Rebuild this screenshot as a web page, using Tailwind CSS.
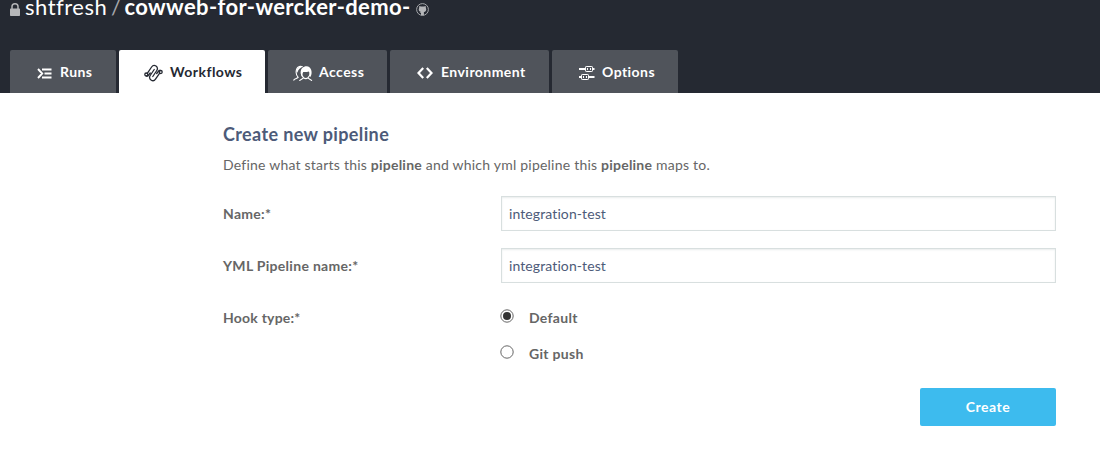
<!DOCTYPE html>
<html lang="en">
<head>
<meta charset="utf-8">
<title>Create new pipeline</title>
<script src="https://cdn.jsdelivr.net/npm/@tailwindcss/browser@4"></script>
</head>
<body class="h-[455px] overflow-hidden bg-white font-['Lato',sans-serif] text-[14px] text-[#666] [font-variant-ligatures:none]">
<header class="flex h-[93px] flex-col justify-between bg-[#252932] pl-[10px]">
  <h1 class="-mt-[7px] flex h-7 items-center whitespace-pre text-[22px] leading-7 text-white">
    <svg class="mt-[4px] mr-[5px] h-[13px] w-[10px] shrink-0" viewBox="0 0 10 13" fill="none"><path d="M2 6V3.600a3 2.800 0 0 1 6 0V6" stroke="#b5b6b9" stroke-width="1.500"/><rect y="5.500" width="10" height="7.500" rx=".7" fill="#b5b6b9"/></svg><span class="w-[82px] tracking-[.5px]">shtfresh</span><span class="w-[17.5px] pl-[4px] text-[#a5a7ab]">/</span><span class="w-[286.5px] font-bold tracking-[.37px]">cowweb-for-wercker-demo-</span><svg class="mt-[4px] ml-[5px] h-[13px] w-[13px] shrink-0" viewBox="0 0 13 13" fill="none"><circle cx="6.500" cy="6.500" r="5.900" stroke="#a5a7ab"/><path d="M3.300 3 5 3.600h3L9.700 3l.2 2c1 2.400-.3 3.800-2 4v3.200H5V10L3.500 9.300 5 9C3.200 8.700 2.100 7.300 3.100 5z" fill="#b5b6b9"/></svg>
  </h1>
  <nav class="flex h-[43px] gap-[3px] font-bold tracking-[.45px] text-white">
    <a class="flex w-[106px] items-center rounded-t-[2px] bg-[#50545b] pl-[27px]"><svg class="mt-[3px] mr-2 h-[13px] w-[15px]" viewBox="0 0 15 13" fill="none" stroke="currentColor" stroke-width="1.900"><path d="M1 2 5.200 6.500 1 11M5 2.500h9.500M7.500 6.500h7M5 10.500h9.500"/></svg>Runs</a>
    <a class="flex w-[146px] items-center rounded-t-[2px] bg-white pl-[25px] text-[#252932]"><svg class="mt-[3px] mr-[7px] h-[18px] w-[19px]" viewBox="0 0 19 18" fill="none" stroke="currentColor" stroke-width="1.300" stroke-linecap="round"><circle cx="2.300" cy="10.500" r="1.500"/><circle cx="16.700" cy="8" r="1.500"/><path d="M3.300 9.300 7.600 3C8.800 1.200 10.500 1 12 2s1.900 2.900.8 4.500L8.800 12.500M15.700 9.200 11.500 15.200C10.300 16.900 8.500 17 7 16S5.100 13.100 6.200 11.500L10.200 5.500M2.500 12h1.300L6.200 9M16.400 6.500h-1.300L12.700 9.500"/></svg>Workflows</a>
    <a class="flex w-[119px] items-center rounded-t-[2px] bg-[#50545b] pl-[25px]"><svg class="mt-[3px] mr-[6px] h-[17px] w-[20px]" viewBox="0 0 20 17" fill="none" stroke="currentColor" stroke-width="1.100"><path d="M.5 15.500c.5-1.900 4.200-2 4.700-3.200C2.600 9.600 3 6 3.700 4 4.700 1.200 7.500 1 9.600 1.800M6.500 16c.4-1.900 3.500-1.700 4-3.300C7.500 10 8.200 6 9.800 5M18.800 16c-.4-1.900-3.300-1.700-3.800-3.300 1.500-1.300 2.300-3.200 1.900-5M10.500 12.800c1.400 1 3.200 1 4.500 0"/><path d="M9.300 12C7 9 7.200 5 9.300 3c2-2 5.500-2.200 7.400-.6 2.300 2 2.600 7 .5 9.800-.2-2.700-.3-4.200-1.400-5.800-1.600.8-4.200.7-5.600.6-.8 1.500-.9 3-.9 5z" fill="currentColor" stroke="none"/><path d="M3.500 7C3.600 3 6 .7 9.800 1.500 7.600 3 5.300 4 4.600 7.500z" fill="currentColor" stroke="none"/></svg>Access</a>
    <a class="flex w-[159px] items-center rounded-t-[2px] bg-[#50545b] pl-[27px]"><svg class="mt-[3px] mr-2 h-3 w-4" viewBox="0 0 16 12" fill="none" stroke="currentColor" stroke-width="2.200"><path d="M6.200 1 1.500 6l4.700 5M9.800 1l4.700 5-4.700 5"/></svg>Environment</a>
    <a class="flex w-[126px] items-center rounded-t-[2px] bg-[#50545b] pl-[27px]"><svg class="mt-[3px] mr-[7px] h-[14px] w-4" viewBox="0 0 16 14" fill="none" stroke="currentColor"><path d="M0 3h6.500M13.500 3h2M0 11h2M9.500 11h6" stroke-width="2"/><rect x="6.500" y=".5" width="7" height="5" rx=".7"/><rect x="2.500" y="8.500" width="7" height="5" rx=".7"/><path d="M8.500 2v2M11.500 2v2M4.500 10v2M7.500 10v2"/></svg>Options</a>
  </nav>
</header>
<main class="ml-[223px] w-[833px] pt-[29px]">
  <h2 class="h-6 text-[18px] leading-6 font-bold tracking-[.37px] text-[#4d5b79]">Create new pipeline</h2>
  <p class="mt-[9px] h-5 leading-5 tracking-[.22px]">Define what starts this <b>pipeline</b> and which yml pipeline this <b>pipeline</b> maps to.</p>
  <form class="mt-[21px] tracking-[.3px]">
    <div class="mb-[17px] flex h-[35px] items-center"><label class="w-[278px] font-bold">Name:*</label><input class="h-[35px] w-[555px] border border-[#d8dfdf] px-[7px] tracking-[.1px] text-[#4d5b79] shadow-[inset_0_1px_2px_#e9eded]" value="integration-test"></div>
    <div class="mb-[17px] flex h-[35px] items-center"><label class="w-[278px] font-bold">YML Pipeline name:*</label><input class="h-[35px] w-[555px] border border-[#d8dfdf] px-[7px] tracking-[.1px] text-[#4d5b79] shadow-[inset_0_1px_2px_#e9eded]" value="integration-test"></div>
    <div class="flex pt-2 font-bold">
      <span class="w-[278px] leading-5 tracking-[.22px]">Hook type:*</span>
      <div class="flex flex-col gap-4 leading-5">
        <label class="flex h-5"><svg class="mt-px -ml-px mr-[15px] h-[14px] w-[14px]" viewBox="0 0 14 14"><circle cx="7" cy="7" r="6.200" fill="white" stroke="#666"/><circle cx="7" cy="7" r="4" fill="#333"/></svg>Default</label>
        <label class="flex h-5"><svg class="mt-px -ml-px mr-[15px] h-[14px] w-[14px]" viewBox="0 0 14 14"><circle cx="7" cy="7" r="6.200" fill="white" stroke="#666"/></svg>Git push</label>
      </div>
    </div>
    <div class="mt-6 flex justify-end"><button type="button" class="h-[38px] w-[136px] rounded-[2px] bg-[#3dbbee] pb-[2px] font-bold tracking-[.5px] text-white">Create</button></div>
  </form>
</main>
</body>
</html>
